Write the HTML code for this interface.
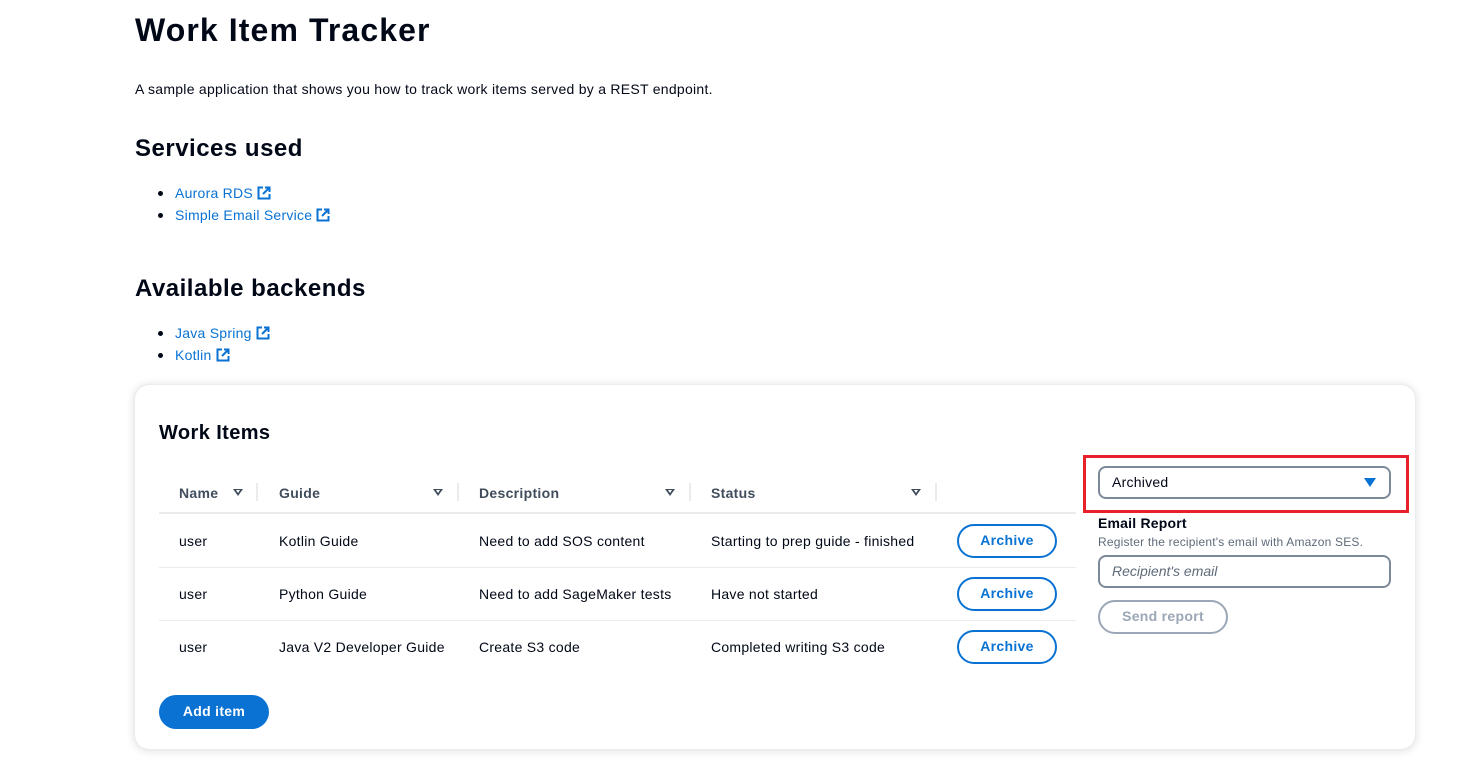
<!DOCTYPE html>
<html><head><style>
*{box-sizing:border-box;margin:0;padding:0}
body{width:1476px;height:772px;background:#fff;font-family:"Liberation Sans",sans-serif;color:#000716;position:relative;overflow:hidden}
.a{position:absolute;white-space:nowrap}
h1{font-size:32px;font-weight:bold;letter-spacing:1.1px}
h2{font-size:24px;font-weight:bold;letter-spacing:0.5px}
.p{font-size:14px;color:#000716;letter-spacing:.27px}
.li{font-size:14px;color:#0972d3;letter-spacing:.25px}
.dot{width:5px;height:5px;border-radius:50%;background:#000716;position:absolute}
.card{position:absolute;left:135px;top:385px;width:1280px;height:364px;border-radius:14px;box-shadow:0 0 1px 1px #e9ebed,0 1px 8px 2px rgba(0,7,22,.1)}
.th{font-size:14px;font-weight:bold;color:#414d5c;letter-spacing:.3px}
.td{font-size:14px;color:#000716;letter-spacing:.27px}
.line{position:absolute;height:1px;background:#e9ebed}
.div{position:absolute;width:2px;height:18px;background:#e9ebed;top:483px}
.btn{position:absolute;border:2px solid #0972d3;border-radius:20px;color:#0972d3;font-weight:bold;font-size:14px;text-align:center;background:#fff;letter-spacing:.3px}
.tri{position:absolute;width:0;height:0;border-left:5px solid transparent;border-right:5px solid transparent;border-top:7px solid #414d5c}
.tri:after{content:"";position:absolute;left:-2px;top:-6px;border-left:2px solid transparent;border-right:2px solid transparent;border-top:3px solid #fff}
</style></head><body>
<h1 class="a" style="left:135px;top:12px">Work Item Tracker</h1>
<div class="a p" style="left:135px;top:81px">A sample application that shows you how to track work items served by a REST endpoint.</div>
<h2 class="a" style="left:135px;top:135px">Services used</h2>
<div class="dot" style="left:158px;top:191px"></div>
<div class="a li" style="left:175px;top:185px">Aurora RDS <svg width="14" height="14" viewBox="0 0 14 14" style="vertical-align:-2px"><path d="M6 1.5H1.5v11h11V8M8 1.5h4.5V6M12.5 1.5L6 8" fill="none" stroke="#0972d3" stroke-width="2"/></svg></div>
<div class="dot" style="left:158px;top:213px"></div>
<div class="a li" style="left:175px;top:207px">Simple Email Service <svg width="14" height="14" viewBox="0 0 14 14" style="vertical-align:-2px"><path d="M6 1.5H1.5v11h11V8M8 1.5h4.5V6M12.5 1.5L6 8" fill="none" stroke="#0972d3" stroke-width="2"/></svg></div>
<h2 class="a" style="left:135px;top:275px">Available backends</h2>
<div class="dot" style="left:158px;top:331px"></div>
<div class="a li" style="left:175px;top:325px">Java Spring <svg width="14" height="14" viewBox="0 0 14 14" style="vertical-align:-2px"><path d="M6 1.5H1.5v11h11V8M8 1.5h4.5V6M12.5 1.5L6 8" fill="none" stroke="#0972d3" stroke-width="2"/></svg></div>
<div class="dot" style="left:158px;top:353px"></div>
<div class="a li" style="left:175px;top:347px">Kotlin <svg width="14" height="14" viewBox="0 0 14 14" style="vertical-align:-2px"><path d="M6 1.5H1.5v11h11V8M8 1.5h4.5V6M12.5 1.5L6 8" fill="none" stroke="#0972d3" stroke-width="2"/></svg></div>

<div class="card"></div>
<div class="a" style="left:159px;top:422px;font-size:20px;font-weight:bold;letter-spacing:.4px">Work Items</div>

<div class="a th" style="left:179px;top:485px">Name</div>
<div class="tri" style="left:233px;top:489px"></div>
<div class="div" style="left:256px"></div>
<div class="a th" style="left:279px;top:485px">Guide</div>
<div class="tri" style="left:433px;top:489px"></div>
<div class="div" style="left:457px"></div>
<div class="a th" style="left:479px;top:485px">Description</div>
<div class="tri" style="left:665px;top:489px"></div>
<div class="div" style="left:689px"></div>
<div class="a th" style="left:711px;top:485px">Status</div>
<div class="tri" style="left:911px;top:489px"></div>
<div class="div" style="left:935px"></div>
<div class="line" style="left:159px;top:512px;width:917px;height:2px"></div>

<div class="a td" style="left:179px;top:533px">user</div>
<div class="a td" style="left:279px;top:533px">Kotlin Guide</div>
<div class="a td" style="left:479px;top:533px">Need to add SOS content</div>
<div class="a td" style="left:711px;top:533px">Starting to prep guide - finished</div>
<div class="btn" style="left:957px;top:524px;width:100px;height:34px;line-height:29px">Archive</div>
<div class="line" style="left:159px;top:567px;width:917px"></div>

<div class="a td" style="left:179px;top:586px">user</div>
<div class="a td" style="left:279px;top:586px">Python Guide</div>
<div class="a td" style="left:479px;top:586px">Need to add SageMaker tests</div>
<div class="a td" style="left:711px;top:586px">Have not started</div>
<div class="btn" style="left:957px;top:577px;width:100px;height:34px;line-height:29px">Archive</div>
<div class="line" style="left:159px;top:620px;width:917px"></div>

<div class="a td" style="left:179px;top:639px">user</div>
<div class="a td" style="left:279px;top:639px">Java V2 Developer Guide</div>
<div class="a td" style="left:479px;top:639px">Create S3 code</div>
<div class="a td" style="left:711px;top:639px">Completed writing S3 code</div>
<div class="btn" style="left:957px;top:630px;width:100px;height:34px;line-height:29px">Archive</div>

<div class="btn" style="left:159px;top:695px;width:110px;height:34px;line-height:33px;background:#0972d3;color:#fff;border:none">Add item</div>

<div class="a" style="left:1083px;top:455px;width:326px;height:58px;border:3px solid #e8202a"></div>
<div class="a" style="left:1098px;top:466px;width:293px;height:33px;border:2px solid #7d8998;border-radius:8px;font-size:14px;padding:6px 12px;letter-spacing:.25px">Archived</div>
<div class="a" style="left:1364px;top:478px;width:0;height:0;border-left:6px solid transparent;border-right:6px solid transparent;border-top:9px solid #0972d3"></div>
<div class="a" style="left:1098px;top:515px;font-size:14px;font-weight:bold;letter-spacing:.2px">Email Report</div>
<div class="a" style="left:1098px;top:535px;font-size:12px;color:#5f6b7a;letter-spacing:.2px">Register the recipient's email with Amazon SES.</div>
<div class="a" style="left:1098px;top:555px;width:293px;height:33px;border:2px solid #7d8998;border-radius:8px;font-size:14px;padding:6px 12px;font-style:italic;color:#5f6b7a">Recipient's email</div>
<div class="btn" style="left:1098px;top:600px;width:130px;height:34px;line-height:29px;border-color:#9ba7b6;color:#9ba7b6">Send report</div>
</body></html>
